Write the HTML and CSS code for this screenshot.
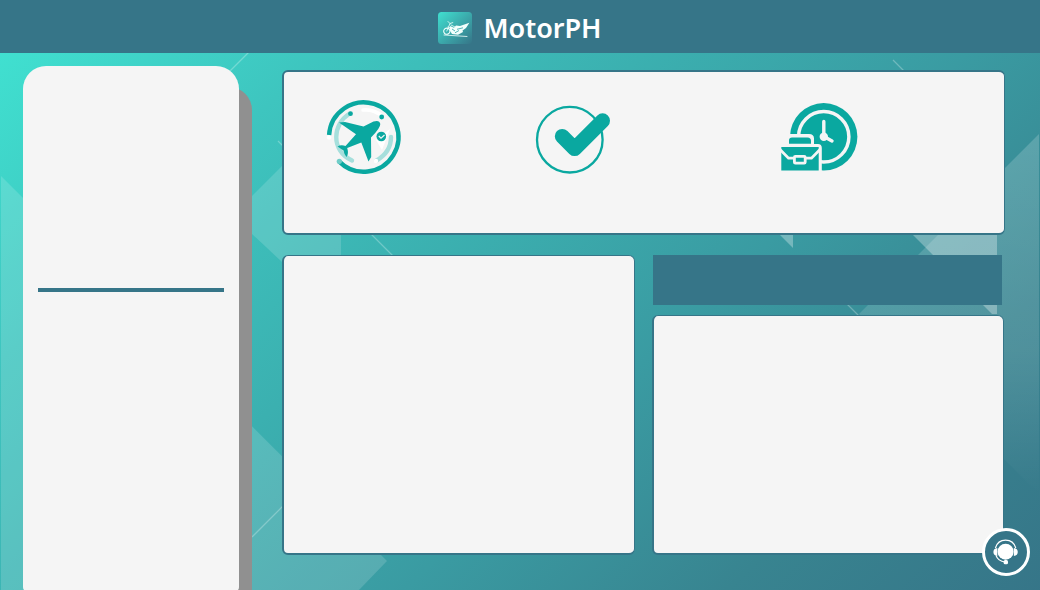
FILE: index.html
```html
<!DOCTYPE html>
<html lang="en">
<head>
<meta charset="utf-8">
<title>MotorPH</title>
<link rel="stylesheet" href="styles.css">
</head>
<body>
<svg class="backdrop" viewBox="0 0 1040 590" aria-hidden="true">
  <defs>
    <linearGradient id="sea" gradientUnits="userSpaceOnUse" x1="0" y1="53" x2="768" y2="858">
      <stop offset="0" stop-color="#40e0d0"/>
      <stop offset=".2" stop-color="#3ec5bf"/>
      <stop offset=".4" stop-color="#3bb0b0"/>
      <stop offset=".6" stop-color="#3a9ba2"/>
      <stop offset=".8" stop-color="#388490"/>
      <stop offset="1" stop-color="#367588"/>
    </linearGradient>
    <linearGradient id="fade" x1="0" y1="0" x2="0" y2="1">
      <stop offset="0" stop-color="#fff" stop-opacity=".18"/>
      <stop offset=".6" stop-color="#fff" stop-opacity=".12"/>
      <stop offset="1" stop-color="#fff" stop-opacity="0"/>
    </linearGradient>
  </defs>
  <rect width="1040" height="590" fill="url(#sea)"/>
  <g fill="#fff" fill-opacity=".15">
    <path d="M1 176L387 561L359 590H1Z"/>
    <path d="M252 196L341 107V262H282L252 234Z"/>
    <path d="M1039 134L859 314L1039 494Z" fill="url(#fade)" fill-opacity="1"/>
  </g>
  <g fill="#fff" fill-opacity=".3">
    <path d="M779 234H793V248Z"/>
    <path d="M912 234H997V314H992Z"/>
  </g>
  <g stroke="#fff" stroke-opacity=".27" stroke-width="1.3">
    <path d="M249 52L229 72M278 141L393 256M252 537L284 505M893 60L905 72M847 304L860 317"/>
  </g>
</svg>
<header class="topbar">
  <svg class="logo" viewBox="0 0 34 32" aria-hidden="true">
    <defs>
      <linearGradient id="badge" x1="0" y1="0" x2="1" y2="1">
        <stop offset="0" stop-color="#40e0d0"/>
        <stop offset="1" stop-color="#367588"/>
      </linearGradient>
    </defs>
    <rect width="34" height="32" rx="3.5" fill="url(#badge)"/>
    <g fill="none" stroke="#f2fffc" stroke-linecap="round" stroke-linejoin="round">
      <circle cx="8.8" cy="19.2" r="3.1" stroke-width="1.1" stroke-dasharray="3 .7"/>
      <path d="M8.8 19L12 11.5L10 9.5M12 11.5L14.8 10.6M10 15L14 16.5M13 13L17 15M6 23L29 24.5" stroke-width=".8"/>
    </g>
    <path d="M12 14L16 15.8L18 13.4L22 14L31.4 10.8L28 16L24.5 18.5L25 20L20 22.7L14 22L11.5 18Z" fill="#f2fffc"/>
    <path d="M14 17L17 19M19 17.3L25 15.8M17 20.8L21 18.5" stroke="#42aeb0" stroke-width=".9"/>
  </svg>
  <h1 class="brand">MotorPH</h1>
</header>
<div class="page">
  <aside class="sidebar"><hr class="divider"></aside>
  <main class="content">
    <section class="card summary">
      <svg class="leave" viewBox="0 0 100 95" aria-hidden="true">
        <path d="M14.1 45A34.7 34.7 0 1 1 24 71.4" fill="none" stroke="#0aa8a0" stroke-width="4.4"/>
        <g fill="none" stroke="#a6dfdc" stroke-width="4.4" stroke-linecap="round">
          <path d="M34 24C18 34 15 60 37 70.5"/>
          <path d="M76 47C76 57 71 65 61.5 70.5"/>
        </g>
        <path d="M48 20Q59 19 67 26" fill="none" stroke="#fff" stroke-width="3.5" stroke-linecap="round"/>
        <path d="M75 39L67 60L61 50" fill="#fff"/>
        <g fill="#0aa8a0">
          <circle cx="35.5" cy="23.7" r="2.4"/>
          <circle cx="66.7" cy="27" r="2.4"/>
          <path d="M24 32.4L30 32L48.5 36.5L58.5 31.5Q64.5 29.5 65.3 34Q65.5 38 56 47.5L56.2 67L53.5 71.5L46.3 52.5L32.2 58Q34 64 31.5 67Q29 64 28.5 60.5L22.5 56.5Q26 54.5 30.5 56L41 44.2Z"/>
          <circle cx="66.3" cy="46.5" r="4.8"/>
        </g>
        <circle cx="24.3" cy="71.3" r="2.6" fill="#70cdc8"/>
        <circle cx="14" cy="47.5" r="2.2" fill="#fff"/>
        <circle cx="61" cy="71" r="2.2" fill="#fff"/>
        <path d="M63.8 46L66 48.2L69.5 45" fill="none" stroke="#f4f4f4" stroke-width="1.2"/>
      </svg>
      <svg class="approved" viewBox="0 0 100 90" aria-hidden="true">
        <circle cx="44.8" cy="44.7" r="32.8" fill="none" stroke="#0aa8a0" stroke-width="2.3"/>
        <path d="M37.2 41.3L49.6 53.7L77.6 25.7" fill="none" stroke="#0aa8a0" stroke-width="14.8" stroke-linecap="round" stroke-linejoin="round"/>
      </svg>
      <svg class="worktime" viewBox="0 0 100 85" aria-hidden="true">
        <circle cx="53.7" cy="41.8" r="33.7" fill="#0aa8a0"/>
        <circle cx="53.7" cy="41.8" r="25.2" fill="none" stroke="#f5f5f5" stroke-width="3.5"/>
        <path d="M53.8 26.5V41.5L62 46" fill="none" stroke="#f5f5f5" stroke-width="3.4" stroke-linecap="round"/>
        <circle cx="53.8" cy="41.8" r="4.2" fill="#f5f5f5"/>
        <path d="M8 85V49H18V39H39Q44 39 44 43.5V49H48Q51.8 49 51.8 53V85Z" fill="#f5f5f5"/>
        <g fill="#0aa8a0">
          <path d="M19 48.7V45.5Q19 42.5 22 42.5H37.5Q41 42.5 41 46V48.7Z"/>
          <path d="M11.3 52H48.7V75.6H11.3Z"/>
        </g>
        <g fill="none" stroke="#f5f5f5" stroke-width="2.8">
          <path d="M10 54.5L18.5 63.2H24M36 63.2H41.5L50 54.5"/>
          <rect x="24.4" y="61.4" width="10.8" height="6.8" rx="1" fill="#0aa8a0"/>
        </g>
      </svg>
    </section>
    <div class="columns">
      <section class="card"></section>
      <div class="stack">
        <div class="banner"></div>
        <section class="card"></section>
      </div>
    </div>
  </main>
</div>
<button class="support" aria-label="Support">
  <svg viewBox="0 0 48 48">
    <circle cx="24" cy="24" r="22.5" fill="#367588" stroke="#fff" stroke-width="3"/>
    <circle cx="23.6" cy="23.7" r="8" fill="#fff"/>
    <path d="M13.4 20C16.4 9.4 30.8 9.4 33.8 20M14 27.5C15.5 31.5 19 33.5 23 34" fill="none" stroke="#fff" stroke-width="1.2"/>
    <path d="M15.3 20V28Q11.4 27.5 11.4 24T15.3 20ZM31.9 20V28Q35.8 27.5 35.8 24T31.9 20Z" fill="#fff"/>
    <rect x="21.6" y="32" width="4.4" height="4.3" rx="1.5" fill="#fff"/>
  </svg>
</button>
</body>
</html>
```

FILE: styles.css
```css
* { box-sizing: border-box; }
body {
  margin: 0;
  height: 590px;
  overflow: hidden;
  position: relative;
  font-family: "Noto Sans", "Open Sans", sans-serif;
}
.backdrop {
  position: absolute;
  inset: 0;
  width: 1040px;
  height: 590px;
  z-index: -1;
}
.topbar {
  display: flex;
  align-items: center;
  justify-content: center;
  gap: 11px;
  height: 53px;
  padding-top: 3px;
  background: #367588;
}
.logo { width: 34px; height: 32px; }
.brand {
  margin: -1px 0 0;
  color: #fff;
  font-size: 27px;
  line-height: 36px;
  font-weight: 600;
}
.page {
  display: flex;
  gap: 43px;
  height: 537px;
  padding: 13px 35px 0 23px;
}
.sidebar {
  width: 216px;
  height: 525px;
  flex: none;
  padding: 222px 15px 0;
  background: #f5f5f5;
  border-radius: 23px 23px 4px 4px;
  box-shadow: 13px 21px 0 #909090;
}
.divider {
  height: 4px;
  margin: 0;
  border: 0;
  background: #367588;
}
.content {
  display: flex;
  flex-direction: column;
  gap: 20px;
  width: 723px;
  flex: none;
  padding-top: 4px;
}
.card {
  background: #f5f5f5;
  border: 1px solid #367588;
  border-width: 1px 1px 2px 2px;
  border-radius: 6px;
}
.summary {
  display: flex;
  align-items: flex-start;
  height: 165px;
  padding: 19px 0 0 31px;
  border-top-width: 2px;
}
.summary svg { flex: none; }
.leave { width: 100px; height: 95px; margin-top: -1px; }
.approved { width: 100px; height: 90px; margin: 4px 0 0 110px; }
.worktime { width: 100px; height: 85px; margin: 4px 0 0 145px; }
.columns {
  display: grid;
  grid-template-columns: 353px 352px;
  gap: 17px;
  height: 300px;
}
.stack { display: flex; flex-direction: column; gap: 10px; }
.stack .card { flex: 1; }
.banner {
  height: 50px;
  margin: 0 2px 0 1px;
  background: #367588;
}
.support {
  position: absolute;
  left: 982px;
  top: 528px;
  width: 48px;
  height: 48px;
  padding: 0;
  border: 0;
  background: none;
}
.support svg { display: block; }
```
